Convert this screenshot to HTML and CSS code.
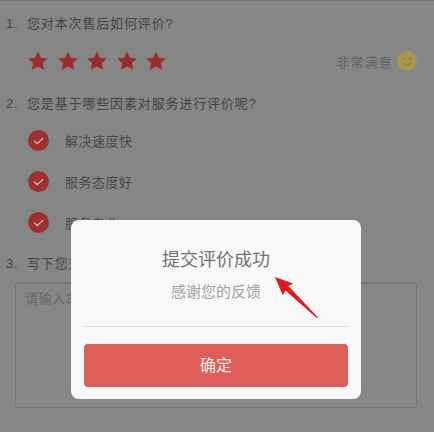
FILE: index.html
```html
<!DOCTYPE html>
<html lang="zh">
<head>
<meta charset="utf-8">
<title>评价</title>
<link rel="stylesheet" href="styles.css">
</head>
<body>
<main class="page">
  <h2 class="question q1">1. 您对本次售后如何评价?</h2>
  <div class="rating">
    <div class="stars">
      <svg class="star" viewBox="0 0 20 20"><path d="M10 .4l2.9 6.3 6.9.7-5 4.6 1.4 6.8-6.2-3.4-6.2 3.4 1.4-6.8-5-4.6 6.9-.7z"/></svg>
      <svg class="star" viewBox="0 0 20 20"><path d="M10 .4l2.9 6.3 6.9.7-5 4.6 1.4 6.8-6.2-3.4-6.2 3.4 1.4-6.8-5-4.6 6.9-.7z"/></svg>
      <svg class="star" viewBox="0 0 20 20"><path d="M10 .4l2.9 6.3 6.9.7-5 4.6 1.4 6.8-6.2-3.4-6.2 3.4 1.4-6.8-5-4.6 6.9-.7z"/></svg>
      <svg class="star" viewBox="0 0 20 20"><path d="M10 .4l2.9 6.3 6.9.7-5 4.6 1.4 6.8-6.2-3.4-6.2 3.4 1.4-6.8-5-4.6 6.9-.7z"/></svg>
      <svg class="star" viewBox="0 0 20 20"><path d="M10 .4l2.9 6.3 6.9.7-5 4.6 1.4 6.8-6.2-3.4-6.2 3.4 1.4-6.8-5-4.6 6.9-.7z"/></svg>
    </div>
    <div class="verdict">
      <span>非常满意</span>
      <svg class="face" viewBox="0 0 20 20"><circle cx="10" cy="10" r="10" fill="#a8964f"/><circle cx="6.8" cy="8" r="1" fill="#8f7d3c"/><circle cx="13.2" cy="8" r="1" fill="#8f7d3c"/><path d="M6 12c1.6 2.6 6.4 2.6 8 0" fill="none" stroke="#8f7d3c" stroke-width="1.1"/></svg>
    </div>
  </div>
  <h2 class="question q2">2. 您是基于哪些因素对服务进行评价呢?</h2>
  <ul class="options">
    <li class="option"><svg class="check" viewBox="0 0 21 21"><circle cx="10.5" cy="10.5" r="10.5" fill="#9d3030"/><path d="M6 10.6l3.2 3.1 5.9-5.6" fill="none" stroke="#d2c4c4" stroke-width="1.3"/></svg>解决速度快</li>
    <li class="option"><svg class="check" viewBox="0 0 21 21"><circle cx="10.5" cy="10.5" r="10.5" fill="#9d3030"/><path d="M6 10.6l3.2 3.1 5.9-5.6" fill="none" stroke="#d2c4c4" stroke-width="1.3"/></svg>服务态度好</li>
    <li class="option"><svg class="check" viewBox="0 0 21 21"><circle cx="10.5" cy="10.5" r="10.5" fill="#9d3030"/><path d="M6 10.6l3.2 3.1 5.9-5.6" fill="none" stroke="#d2c4c4" stroke-width="1.3"/></svg>服务专业</li>
  </ul>
  <h2 class="question q3">3. 写下您对本次服务的评价</h2>
  <div class="textarea">请输入300字以内的评价</div>
</main>
<div class="scrim">
  <section class="dialog">
    <h1 class="dialog-title">提交评价成功</h1>
    <p class="dialog-sub">感谢您的反馈</p>
    <hr class="dialog-rule">
    <button class="dialog-btn">确定</button>
  </section>
  <svg class="arrow" viewBox="0 0 50 50"><path d="M1 3l18 6.5-4.6 2.6L44 43.5l-1 .8L11.5 16.4 8.7 21z" fill="#e0191f"/></svg>
</div>
</body>
</html>
```
FILE: styles.css
```css
* { box-sizing: border-box; }
html, body { margin: 0; height: 100%; }
body {
  background: #868686;
  font-family: "Liberation Sans", "Noto Sans CJK SC", sans-serif;
  color: #444;
  overflow: hidden;
}
.page {
  height: 432px;
  padding: 0 18px 0 6px;
  border-top: 1px solid #757575;
}
.question {
  margin: 0;
  font-size: 13px;
  font-weight: 400;
  line-height: 20px;
  letter-spacing: .85px;
  word-spacing: 4px;
  white-space: nowrap;
}
.q1 { margin-top: 13px; }
.q2 { margin-top: 21px; }
.q3 { margin-top: 21px; }
.rating {
  display: flex;
  align-items: center;
  justify-content: space-between;
  height: 24px;
  margin-top: 15px;
  padding-left: 22px;
}
.stars { display: flex; gap: 9.6px; }
.star { width: 20px; height: 20px; fill: #9a2c2c; display: block; }
.verdict {
  display: flex;
  align-items: center;
  gap: 4px;
  font-size: 13px;
  letter-spacing: 1.2px;
  color: #636363;
}
.face { width: 20px; height: 20px; display: block; margin-right: -1px; }
.options {
  list-style: none;
  margin: 16px 0 0;
  padding: 0 0 0 22px;
  display: flex;
  flex-direction: column;
  gap: 20px;
}
.option {
  display: flex;
  align-items: center;
  gap: 16px;
  height: 21px;
  font-size: 13px;
  letter-spacing: .5px;
  color: #4a4a4a;
}
.check { width: 21px; height: 21px; display: block; }
.textarea {
  height: 126px;
  margin: 8px -1px 0 9px;
  padding: 4px 9px;
  border: 1px solid #757575;
  border-top-width: 2px;
  border-radius: 4px;
  font-size: 13px;
  letter-spacing: .5px;
  color: #666;
}
.scrim {
  position: fixed;
  inset: 0;
  display: flex;
  flex-direction: column;
  align-items: center;
  padding-top: 220px;
  padding-right: 2px;
}
.dialog {
  width: 290px;
  height: 179px;
  padding: 28px 13px 0;
  background: #f8f8f9;
  border-radius: 8px;
  text-align: center;
  display: flex;
  flex-direction: column;
}
.dialog-title {
  margin: 0;
  font-size: 18px;
  font-weight: 400;
  line-height: 24px;
  color: #707070;
}
.dialog-sub {
  margin: 10px 0 0;
  font-size: 15px;
  line-height: 20px;
  color: #a2a2a2;
}
.dialog-rule {
  width: 100%;
  margin: 24px 0 0;
  border: 0;
  border-top: 1px solid #dfdfdf;
}
.dialog-btn {
  width: 100%;
  height: 43px;
  margin-top: 17px;
  padding: 0 0 3px;
  border: 0;
  border-radius: 4px;
  background: #de5e59;
  color: #fdeeee;
  font: inherit;
  font-size: 16px;
}
.arrow {
  position: absolute;
  left: 274px;
  top: 274px;
  width: 50px;
  height: 50px;
}
```
